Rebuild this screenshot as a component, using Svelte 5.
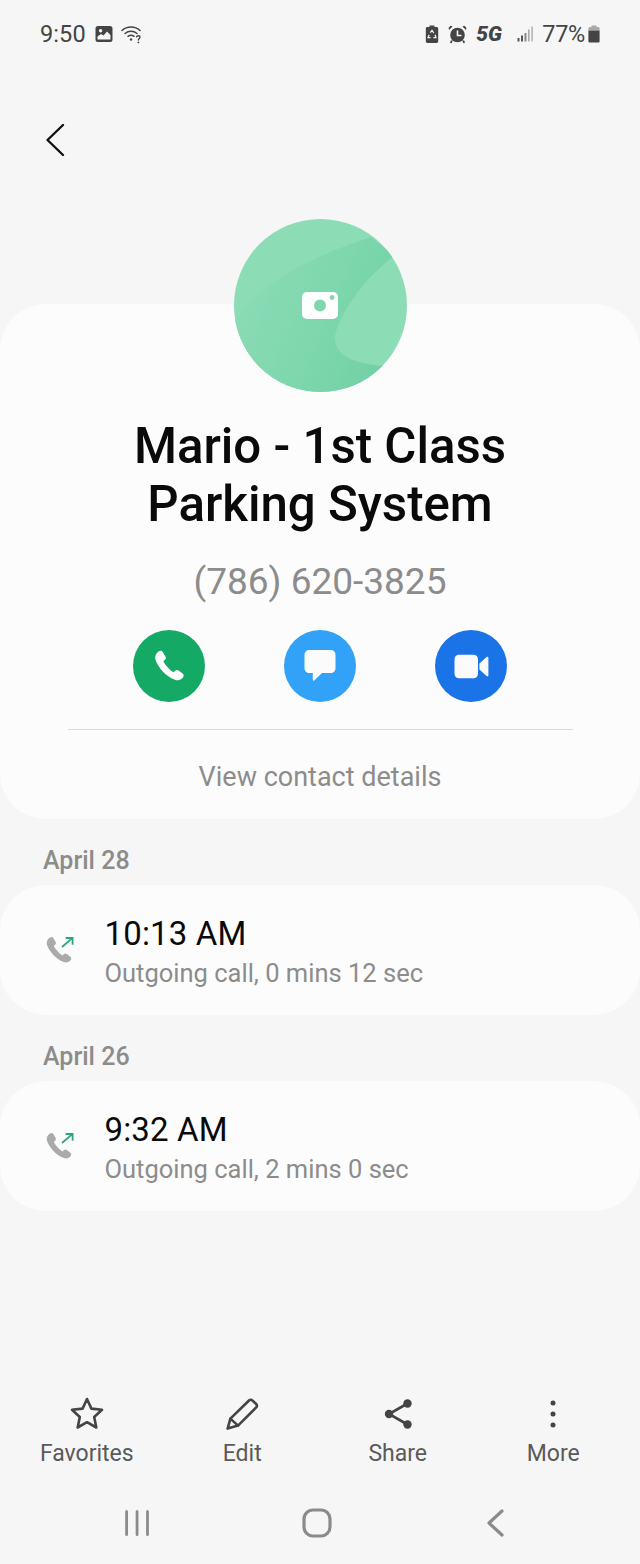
<script>
  const days = [
    { date: 'April 28', time: '10:13 AM', detail: 'Outgoing call, 0 mins 12 sec' },
    { date: 'April 26', time: '9:32 AM', detail: 'Outgoing call, 2 mins 0 sec' }
  ];
</script>

<div class="page">
  <header class="status">
    <div class="status-left">
      <span class="clock">9:50</span>
      <svg class="ic-img" width="18" height="18" viewBox="0 0 18 18">
        <rect x="0.5" y="1" width="17" height="16" rx="2.5" fill="#444"/>
        <circle cx="5.6" cy="5.8" r="1.7" fill="#f6f6f6"/>
        <path d="M2.5 14.5 L2.5 11.5 L6 9 L8.5 10.5 L12 6.5 L15.5 10 L15.5 14.5 Z" fill="#f6f6f6"/>
      </svg>
      <svg class="ic-wifi" width="22" height="20" viewBox="0 0 22 20" fill="none" stroke="#444" stroke-width="1.5" stroke-linecap="round">
        <path d="M1 6.5 C6 1.8 14 1.8 19 6.5"/>
        <path d="M4 9.5 C7.5 6.5 12.5 6.5 16 9.5"/>
        <path d="M7 12.3 C8.8 11 11.2 11 13 12.3"/>
        <circle cx="10" cy="15.5" r="1.2" fill="#444" stroke="none"/>
        <path d="M15.6 12.8 C16 11.4 19 11.4 19 13.2 C19 14.4 17.4 14.5 17.4 16" stroke-width="1.4"/>
        <circle cx="17.4" cy="18.4" r="0.9" fill="#444" stroke="none"/>
      </svg>
    </div>
    <div class="status-right">
      <svg width="14" height="20" viewBox="0 0 14 20">
        <path d="M4.5 1.5 H9.5 V3 H11.5 C12.6 3 13.2 3.6 13.2 4.7 V17.3 C13.2 18.4 12.6 19 11.5 19 H2.5 C1.4 19 .8 18.4 .8 17.3 V4.7 C.8 3.6 1.4 3 2.5 3 H4.5 Z" fill="#444"/>
        <path d="M5.4 8.6 L7 6.4 L8.8 9 M10 10.8 L11 13.6 H8.4 M5.6 13.6 H3 L4.2 10.8" stroke="#f6f6f6" stroke-width="1.2" fill="none"/>
      </svg>
      <svg class="ic-alarm" width="19" height="19" viewBox="0 0 19 19">
        <circle cx="9.5" cy="10" r="7.3" fill="#444"/>
        <path d="M1 5 L4.6 1.4 L2.6 0.8 L0.6 2.8 Z M18 5 L14.4 1.4 L16.4 0.8 L18.4 2.8 Z" fill="#444"/>
        <path d="M3.8 15.5 L2.8 18 M15.2 15.5 L16.2 18" stroke="#444" stroke-width="1.8"/>
        <path d="M9.5 5.5 V10.5 H13.5" stroke="#f6f6f6" stroke-width="1.6" fill="none"/>
      </svg>
      <span class="fiveg">5G</span>
      <svg class="ic-signal" width="17" height="16" viewBox="0 0 17 16">
        <rect x="0.5" y="12" width="2" height="3.5" fill="#555"/>
        <rect x="4" y="9.5" width="2" height="6" fill="#555"/>
        <rect x="7.5" y="7" width="2" height="8.5" fill="#888"/>
        <rect x="11" y="3.5" width="1.6" height="12" fill="#aaa"/>
        <rect x="14.3" y="0.5" width="1.6" height="15" fill="#b5b5b5"/>
      </svg>
      <span class="pct">77%</span>
      <svg class="ic-batt" width="12" height="18" viewBox="0 0 12 18">
        <rect x="3.5" y="0.5" width="5" height="2" fill="#aaa"/>
        <path d="M2 2 H10 C11 2 11.6 2.6 11.6 3.6 V5.5 H.4 V3.6 C.4 2.6 1 2 2 2 Z" fill="#aaa"/>
        <path d="M.4 5.5 H11.6 V16 C11.6 17 11 17.6 10 17.6 H2 C1 17.6 .4 17 .4 16 Z" fill="#444"/>
      </svg>
    </div>
  </header>

  <button class="back" aria-label="Back">
    <svg width="20" height="34" viewBox="0 0 20 34" fill="none" stroke="#111" stroke-width="2.4" stroke-linecap="round" stroke-linejoin="round">
      <path d="M18 2 L2.5 17 L18 32"/>
    </svg>
  </button>

  <section class="card profile">
    <div class="avatar">
      <svg width="173" height="173" viewBox="0 0 173 173">
        <defs>
          <linearGradient id="ag" x1="0" y1="0.35" x2="1" y2="0.75">
            <stop offset="0" stop-color="#8cdcb6"/>
            <stop offset="0.6" stop-color="#7cd6ac"/>
            <stop offset="1" stop-color="#70d0a3"/>
          </linearGradient>
          <clipPath id="ac"><circle cx="86.5" cy="86.5" r="86.5"/></clipPath>
        </defs>
        <circle cx="86.5" cy="86.5" r="86.5" fill="#8cdcb6"/>
        <path clip-path="url(#ac)" d="M-4 110 C22 62 85 35 137 18 L160 37 C130 60 110 88 101 116 C99 134 116 145 150 147 L130 180 L0 180 Z" fill="url(#ag)"/>
        <rect x="68" y="73" width="36" height="27" rx="5" fill="#fff"/>
        <circle cx="86" cy="86.5" r="6" fill="#7ed7ad"/>
        <circle cx="98" cy="78.5" r="2.4" fill="#7ed7ad"/>
      </svg>
    </div>
    <h1>Mario - 1st Class<br />Parking System</h1>
    <p class="phone">(786) 620-3825</p>
    <div class="actions">
      <span class="act green">
        <svg width="34" height="34" viewBox="0 0 34 34">
          <path d="M6.6 2.6 C8.2 1.4 9.9 1.6 10.8 3 L13.4 7.4 C14.2 8.8 13.9 10 12.7 11 L11.4 12 C11.9 14.6 18.6 22.2 21.6 23.2 L23 21.8 C24 20.8 25.4 20.7 26.6 21.6 L30.6 24.6 C32 25.7 32 27.4 30.8 28.8 C29 31 26 32 23 30.8 C13.6 27 6 18.6 3.4 10.4 C2.6 7.4 4 4.4 6.6 2.6 Z" fill="#fff"/>
        </svg>
      </span>
      <span class="act sky">
        <svg width="32" height="34" viewBox="0 0 32 34">
          <path d="M5.5 1 H26.5 C29.5 1 31.5 3 31.5 6 V19 C31.5 22 29.5 24 26.5 24 H18 L10.2 31.4 C9.6 32 8.8 31.6 8.8 30.8 V24 H5.5 C2.5 24 .5 22 .5 19 V6 C.5 3 2.5 1 5.5 1 Z" fill="#fbfbfb"/>
        </svg>
      </span>
      <span class="act blue">
        <svg width="35" height="25" viewBox="0 0 35 25">
          <path d="M5 .8 H19.5 C22.2 .8 24 2.6 24 5.3 V19.7 C24 22.4 22.2 24.2 19.5 24.2 H5 C2.3 24.2 .5 22.4 .5 19.7 V5.3 C.5 2.6 2.3 .8 5 .8 Z" fill="#fbfbfb"/>
          <path d="M25.4 9.6 L32.6 3 C33.4 2.3 34.4 2.7 34.4 3.8 V21.2 C34.4 22.3 33.4 22.7 32.6 22 L25.4 15.4 Z" fill="#fbfbfb"/>
        </svg>
      </span>
    </div>
    <hr />
    <p class="details">View contact details</p>
  </section>

  {#each days as day}
    <h2>{day.date}</h2>
    <section class="card log">
      <svg class="log-ic" width="30" height="30" viewBox="0 0 30 30">
        <path transform="translate(-1 -0.5) scale(.86)" d="M6.6 2.6 C8.2 1.4 9.9 1.6 10.8 3 L13.4 7.4 C14.2 8.8 13.9 10 12.7 11 L11.4 12 C11.9 14.6 18.6 22.2 21.6 23.2 L23 21.8 C24 20.8 25.4 20.7 26.6 21.6 L30.6 24.6 C32 25.7 32 27.4 30.8 28.8 C29 31 26 32 23 30.8 C13.6 27 6 18.6 3.4 10.4 C2.6 7.4 4 4.4 6.6 2.6 Z" fill="#aaa"/>
        <path d="M17 11 L27 2.4 M20.6 2 H27.6 V8.8" fill="none" stroke="#30a67c" stroke-width="1.8"/>
      </svg>
      <div class="log-text">
        <div class="time">{day.time}</div>
        <div class="detail">{day.detail}</div>
      </div>
    </section>
  {/each}

  <div class="spacer"></div>

  <nav class="tabs">
    <div class="tab">
      <svg width="36" height="36" viewBox="0 0 36 36" fill="none" stroke="#444" stroke-width="2.6" stroke-linejoin="round">
        <path d="M18 3 L22.4 12.6 L33 13.8 L25.2 21 L27.3 31.5 L18 26.2 L8.7 31.5 L10.8 21 L3 13.8 L13.6 12.6 Z"/>
      </svg>
      <span>Favorites</span>
    </div>
    <div class="tab">
      <svg width="36" height="36" viewBox="0 0 36 36" fill="none" stroke="#444" stroke-width="2.6" stroke-linejoin="round" stroke-linecap="round">
        <path d="M25 4.5 C26 3.5 27.4 3.5 28.4 4.5 L32.2 8 C33.2 9 33.2 10.4 32.2 11.4 L14 29.6 L3.6 32.6 L6.4 22.6 Z"/>
        <path d="M6.4 22.6 L14 29.6"/>
      </svg>
      <span>Edit</span>
    </div>
    <div class="tab">
      <svg width="36" height="36" viewBox="0 0 36 36">
        <path d="M27.5 7.5 L9 18 L27.5 28.5" fill="none" stroke="#444" stroke-width="2.6"/>
        <circle cx="27.5" cy="7.5" r="4.2" fill="#444"/>
        <circle cx="9" cy="18" r="4.2" fill="#444"/>
        <circle cx="27.5" cy="28.5" r="4.2" fill="#444"/>
      </svg>
      <span>Share</span>
    </div>
    <div class="tab">
      <svg width="36" height="36" viewBox="0 0 36 36">
        <circle cx="18" cy="7" r="2.5" fill="#444"/>
        <circle cx="18" cy="18" r="2.5" fill="#444"/>
        <circle cx="18" cy="29" r="2.5" fill="#444"/>
      </svg>
      <span>More</span>
    </div>
  </nav>

  <footer class="softkeys">
    <svg width="30" height="30" viewBox="0 0 30 30" stroke="#8b8b8b" stroke-width="3.2" stroke-linecap="round">
      <path d="M3 3.5 V26.5 M15 3.5 V26.5 M27 3.5 V26.5" transform="translate(2 0) scale(0.87 1)"/>
    </svg>
    <svg width="30" height="30" viewBox="0 0 30 30" fill="none" stroke="#8b8b8b" stroke-width="3.2">
      <rect x="2" y="2" width="26" height="26" rx="9"/>
    </svg>
    <svg width="30" height="30" viewBox="0 0 30 30" fill="none" stroke="#8b8b8b" stroke-width="3.2" stroke-linecap="round" stroke-linejoin="round">
      <path d="M21 3 L8 15 L21 27"/>
    </svg>
  </footer>
</div>

<style>
  :global(body) { margin: 0; background: #f6f6f6; }
  .page {
    width: 640px;
    height: 1564px;
    background: #f6f6f6;
    display: flex;
    flex-direction: column;
    font-family: Roboto, "Liberation Sans", sans-serif;
    overflow: hidden;
  }
  .status {
    height: 68px;
    padding: 0 40px;
    box-sizing: border-box;
    display: flex;
    justify-content: space-between;
    align-items: center;
    color: #444;
  }
  .status-left, .status-right { display: flex; align-items: center; }
  .clock { font-size: 23.5px; letter-spacing: 0.1px; }
  .ic-img { margin-left: 9px; }
  .ic-wifi { margin-left: 8px; }
  .ic-alarm { margin-left: 9px; }
  .fiveg {
    margin-left: 9px;
    font-size: 21px;
    font-weight: 900;
    font-style: italic;
    width: 27px;
  }
  .ic-signal { margin-left: 14px; }
  .pct { margin-left: 8px; font-size: 23.5px; letter-spacing: -0.3px; }
  .ic-batt { margin-left: 3px; }
  .back {
    align-self: flex-start;
    margin: 55px 0 0 45px;
    padding: 0;
    border: 0;
    background: none;
    height: 36px;
  }
  .card { background: #fcfcfc; }
  .profile {
    margin-top: 145px;
    height: 515px;
    box-sizing: border-box;
    border-radius: 46px;
    display: flex;
    flex-direction: column;
    align-items: center;
    position: relative;
  }
  .avatar {
    position: absolute;
    top: -85px;
    left: 233.5px;
    width: 173px;
    height: 173px;
  }
  h1 {
    margin: 113px 0 0;
    font-size: 49.2px;
    line-height: 58px;
    font-weight: 500;
    color: #0a0a0a;
    text-align: center;
  }
  .phone {
    margin: 27px 0 0;
    font-size: 37px;
    line-height: 44px;
    color: #8c8c8c;
  }
  .actions {
    margin-top: 26px;
    width: 374px;
    display: flex;
    justify-content: space-between;
  }
  .act {
    width: 72px;
    height: 72px;
    border-radius: 50%;
    display: flex;
    align-items: center;
    justify-content: center;
  }
  .green { background: #14aa66; }
  .sky { background: #31a2f7; }
  .blue { background: #1b73e8; }
  hr {
    margin: 27px 0 0;
    width: 505px;
    border: 0;
    border-top: 1px solid #d9d9d9;
  }
  .details {
    margin: 30px 0 0;
    font-size: 27px;
    line-height: 34px;
    color: #8c8c8c;
  }
  h2 {
    margin: 26px 0 0 43px;
    font-size: 25px;
    line-height: 32px;
    font-weight: 500;
    color: #8c8c8c;
  }
  h2 + .log { margin-top: 8px; }
  .log {
    height: 130px;
    border-radius: 46px;
    display: flex;
    align-items: center;
    padding-left: 45px;
  }
  .log-ic { margin-top: 2px; }
  .log-text { margin-left: 29.5px; margin-top: 3px; }
  .time { font-size: 33px; line-height: 40px; color: #0a0a0a; letter-spacing: 0.15px; }
  .detail { font-size: 25.5px; line-height: 32px; color: #8c8c8c; margin-top: 3px; }
  .spacer { flex: 1; }
  .tabs {
    padding: 0 9px;
    display: grid;
    grid-template-columns: repeat(4, 1fr);
    transform: none;
  }
  .tab {
    display: flex;
    flex-direction: column;
    align-items: center;
    color: #5a5a5a;
    font-size: 23px;
    line-height: 30px;
  }
  .tab span { margin-top: 7px; }
  .softkeys {
    margin-top: 39px;
    padding: 0 129px 26px 122px;
    height: 30px;
    display: flex;
    justify-content: space-between;
    align-items: center;
  }
</style>
